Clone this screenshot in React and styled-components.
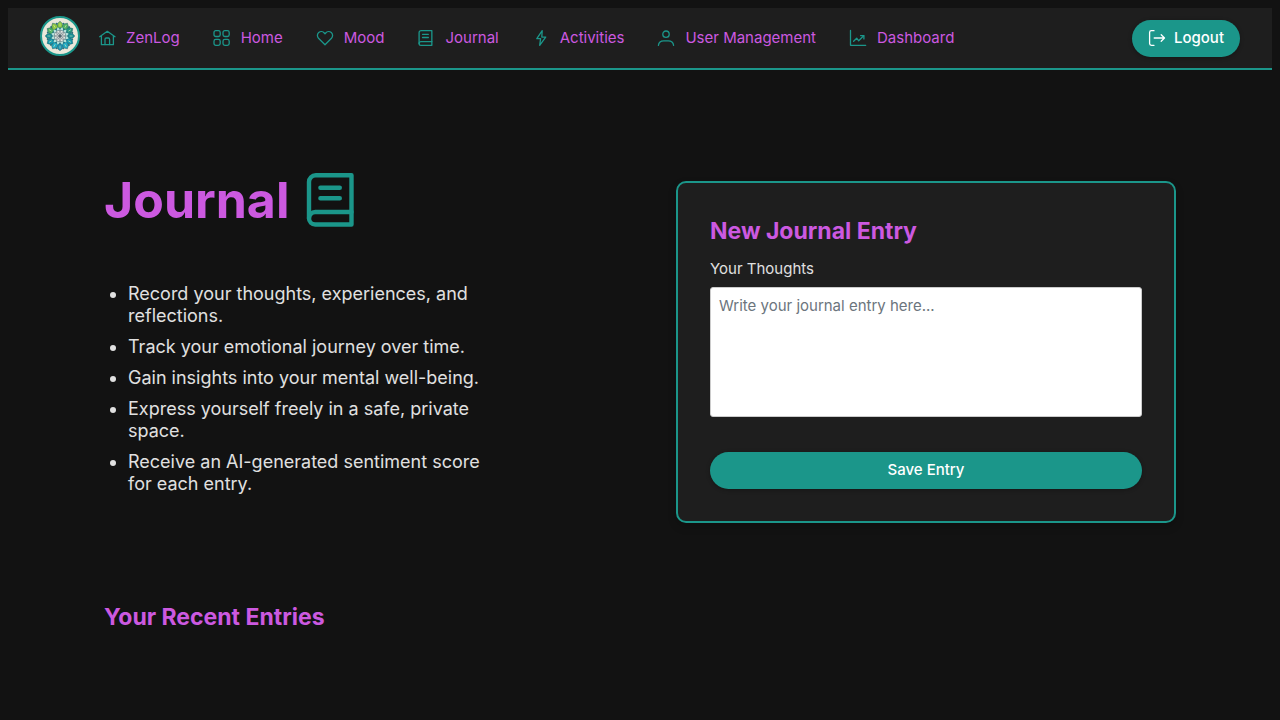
import React from "react";
import styled, { createGlobalStyle } from "styled-components";

const teal = "#1b968a";
const orchid = "#cc59e0";

const GlobalStyle = createGlobalStyle`
  * { box-sizing: border-box; }
  body {
    margin: 8px;
    background: #121212;
    color: #e0e0e0;
    font-family: Inter, "Liberation Sans", sans-serif;
    font-size: 15px;
    line-height: 20px;
  }
`;

const Header = styled.header`
  display: flex;
  align-items: center;
  min-height: 62px;
  padding: 0 32px;
  background: #1e1e1e;
  border-bottom: 2px solid ${teal};
`;

const Logo = styled.svg`
  flex: none;
  width: 40px;
  height: 40px;
  margin-bottom: 4px;
`;

const Nav = styled.nav`
  display: flex;
  flex: 1;
  gap: 33px;
  margin-left: 18px;
`;

const NavLink = styled.a`
  display: flex;
  align-items: center;
  gap: 10px;
  color: ${orchid};
  text-decoration: none;
  white-space: nowrap;
`;

const Icon = styled.svg`
  flex: none;
  width: ${(p) => p.$size || 18}px;
  height: ${(p) => p.$size || 18}px;
  color: ${(p) => p.$color || teal};
  fill: none;
  stroke: currentColor;
  stroke-width: ${(p) => p.$stroke || 1.3};
  stroke-linecap: round;
  stroke-linejoin: round;
`;

const Button = styled.button`
  display: flex;
  align-items: center;
  justify-content: center;
  gap: 8px;
  width: ${(p) => (p.$wide ? "100%" : "auto")};
  height: 37px;
  padding: 0 16px;
  border: 0;
  border-radius: 20px;
  background: ${teal};
  color: #fff;
  font: inherit;
  font-weight: 500;
  box-shadow: 0 1px 4px rgba(0, 0, 0, 0.3);
  cursor: pointer;
`;

const Main = styled.main`
  padding: 98px 96px;
`;

const Columns = styled.section`
  display: grid;
  grid-template-columns: 1fr 1fr;
  align-items: center;
  gap: 72px;
`;

const Title = styled.h1`
  display: flex;
  align-items: center;
  gap: 14px;
  margin: 0 0 51px;
  color: ${orchid};
  font-size: 50px;
  line-height: 64px;
`;

const Points = styled.ul`
  max-width: 400px;
  margin: 0 0 40px;
  padding-left: 24px;
  font-size: 18px;
  line-height: 22px;
`;

const Point = styled.li`
  margin-bottom: 9px;
`;

const Card = styled.form`
  display: flex;
  flex-direction: column;
  padding: 32px;
  background: #1e1e1e;
  border: 2px solid ${teal};
  border-radius: 10px;
  box-shadow: 0 4px 8px rgba(0, 0, 0, 0.2);
`;

const Heading = styled.h2`
  margin: 0;
  color: ${orchid};
  font-size: 23px;
  line-height: 32px;
`;

const Label = styled.label`
  margin: 12px 0 8px;
`;

const Thoughts = styled.textarea`
  height: 130px;
  margin-bottom: 35px;
  padding: 8px;
  border: 1px solid #ccc;
  border-radius: 3px;
  background: #fff;
  color: #212529;
  font: inherit;
  resize: none;
  &::placeholder { color: #6c757d; opacity: 1; }
`;

const Recent = styled.section`
  margin-top: 66px;
`;

const shapes = {
  home: (
    <>
      <path d="M1.7 7.7 9.3 2.3 17 7.7M3.4 6.7v9h12v-9" />
      <path d="M7 15.5v-5.3q0-1.2 1.2-1.2h2.2q1.2 0 1.2 1.2v5.3" />
    </>
  ),
  grid: (
    <>
      <rect x="1" y="1.6" width="6.2" height="5.9" rx="1.8" />
      <rect x="10" y="1.6" width="6.2" height="5.9" rx="1.8" />
      <rect x="1" y="10.4" width="6.2" height="5.9" rx="1.8" />
      <rect x="10" y="10.4" width="6.2" height="5.9" rx="1.8" />
    </>
  ),
  heart: (
    <path d="M9 15.8 2.5 9.3C.9 7.6 1.1 5 2.7 3.6c1.7-1.4 4.2-1.2 5.6.4l.7.8.7-.8c1.4-1.6 3.9-1.8 5.6-.4 1.6 1.4 1.8 4 .2 5.7Z" />
  ),
  bolt: <path d="M10.2 1.7 4.8 9.6h3.8l-.9 6.7 6-8.2H9.8Z" />,
  user: (
    <>
      <circle cx="9" cy="5.2" r="3.2" />
      <path d="M1.4 16.3C1.8 13.3 4 11.9 6.7 11.9h4.6c2.7 0 4.9 1.4 5.3 4.4" />
    </>
  ),
  chart: (
    <>
      <path d="M1.5 1.5v14.8h15.2M4.6 12.2 7.7 9.2l2 2.6 5-5" />
      <path d="M11.6 6.6h3.3v3.3" />
    </>
  ),
  logout: (
    <>
      <path d="M6 1.7H3.4C2.3 1.7 1.6 2.4 1.6 3.5v11c0 1.1.7 1.8 1.8 1.8H6" />
      <path d="M6.2 9h10.3M13.2 5.7 16.5 9l-3.3 3.3" />
    </>
  ),
};

const NavIcon = ({ name, color }) => (
  <Icon viewBox="0 0 18 18" $color={color} aria-hidden="true">{shapes[name]}</Icon>
);

const Book = ({ size, viewBox = "0 0 54 54" }) => (
  <Icon viewBox={viewBox} $size={size} $stroke={4.4} aria-hidden="true">
    <path d="M48.5 51.5H12.2A6.2 6.2 0 0 1 6 45.3V9a6.7 6.7 0 0 1 6.7-6.7h35.8Z" />
    <path d="M6 45.3A6.2 6.2 0 0 1 12.2 39h36.3M17.4 14.7h19.4M17.4 25.3h19.4" />
  </Icon>
);

const ring = (n) => Array.from({ length: n }, (_, i) => (360 / n) * i);
const petals = ["#8cc63f", "#4fae62", "#23957f", "#168c94", "#1699ae", "#20a9c4", "#1d8fb0", "#20a9c4", "#1699ae", "#168c94", "#4cae62", "#8cc63f"];

const MandalaLogo = () => (
  <Logo viewBox="0 0 40 40" role="img" aria-label="ZenLog logo">
    <circle cx="20" cy="20" r="19" fill="#ebe8da" stroke={teal} strokeWidth="2" />
    {ring(12).map((a, i) => (
      <g key={a} transform={`rotate(${a} 20 20)`}>
        <circle cx="23.4" cy="7.8" r="1" fill="#28737c" />
        <path d="M20 5.2q6.2 4.4 0 9.4q-6.2-5 0-9.4Z" fill={petals[i]} stroke="#24636c" strokeWidth=".5" />
        <path d="M20 7.4v3" stroke="#d9eeb8" strokeWidth=".6" />
      </g>
    ))}
    <circle cx="20" cy="20" r="8.4" fill="#246f7e" />
    {ring(12).map((a) => (
      <path key={a} d="M20 11q3 2.8 0 5q-3-2.2 0-5Z" fill="#b4e2da" transform={`rotate(${a + 15} 20 20)`} />
    ))}
    <circle cx="20" cy="20" r="5.7" fill="#e9ece7" stroke="#526a74" strokeWidth=".6" />
    {ring(8).map((a) => (
      <path key={a} d="M20 14.7q2.1 2.6 0 5.3q-2.1-2.7 0-5.3Z" fill="none" stroke="#667780" strokeWidth=".6" transform={`rotate(${a} 20 20)`} />
    ))}
    <circle cx="20" cy="20" r="1.2" fill="#536872" />
  </Logo>
);

const links = [
  ["home", "ZenLog"],
  ["grid", "Home"],
  ["heart", "Mood"],
  ["book", "Journal"],
  ["bolt", "Activities"],
  ["user", "User Management"],
  ["chart", "Dashboard"],
];

const points = [
  "Record your thoughts, experiences, and reflections.",
  "Track your emotional journey over time.",
  "Gain insights into your mental well-being.",
  "Express yourself freely in a safe, private space.",
  "Receive an AI-generated sentiment score for each entry.",
];

export default function App() {
  return (
    <>
      <GlobalStyle />
      <Header>
        <MandalaLogo />
        <Nav>
          {links.map(([icon, label]) => (
            <NavLink key={label} href="#">
              {icon === "book" ? <Book size={18} viewBox="-1 -3 60 60" /> : <NavIcon name={icon} />}
              {label}
            </NavLink>
          ))}
        </Nav>
        <Button type="button">
          <NavIcon name="logout" color="#fff" />
          Logout
        </Button>
      </Header>
      <Main>
        <Columns>
          <div>
            <Title>Journal <Book size={54} /></Title>
            <Points>
              {points.map((text) => <Point key={text}>{text}</Point>)}
            </Points>
          </div>
          <Card>
            <Heading>New Journal Entry</Heading>
            <Label htmlFor="thoughts">Your Thoughts</Label>
            <Thoughts id="thoughts" placeholder="Write your journal entry here..." />
            <Button type="submit" $wide>Save Entry</Button>
          </Card>
        </Columns>
        <Recent>
          <Heading>Your Recent Entries</Heading>
        </Recent>
      </Main>
    </>
  );
}
